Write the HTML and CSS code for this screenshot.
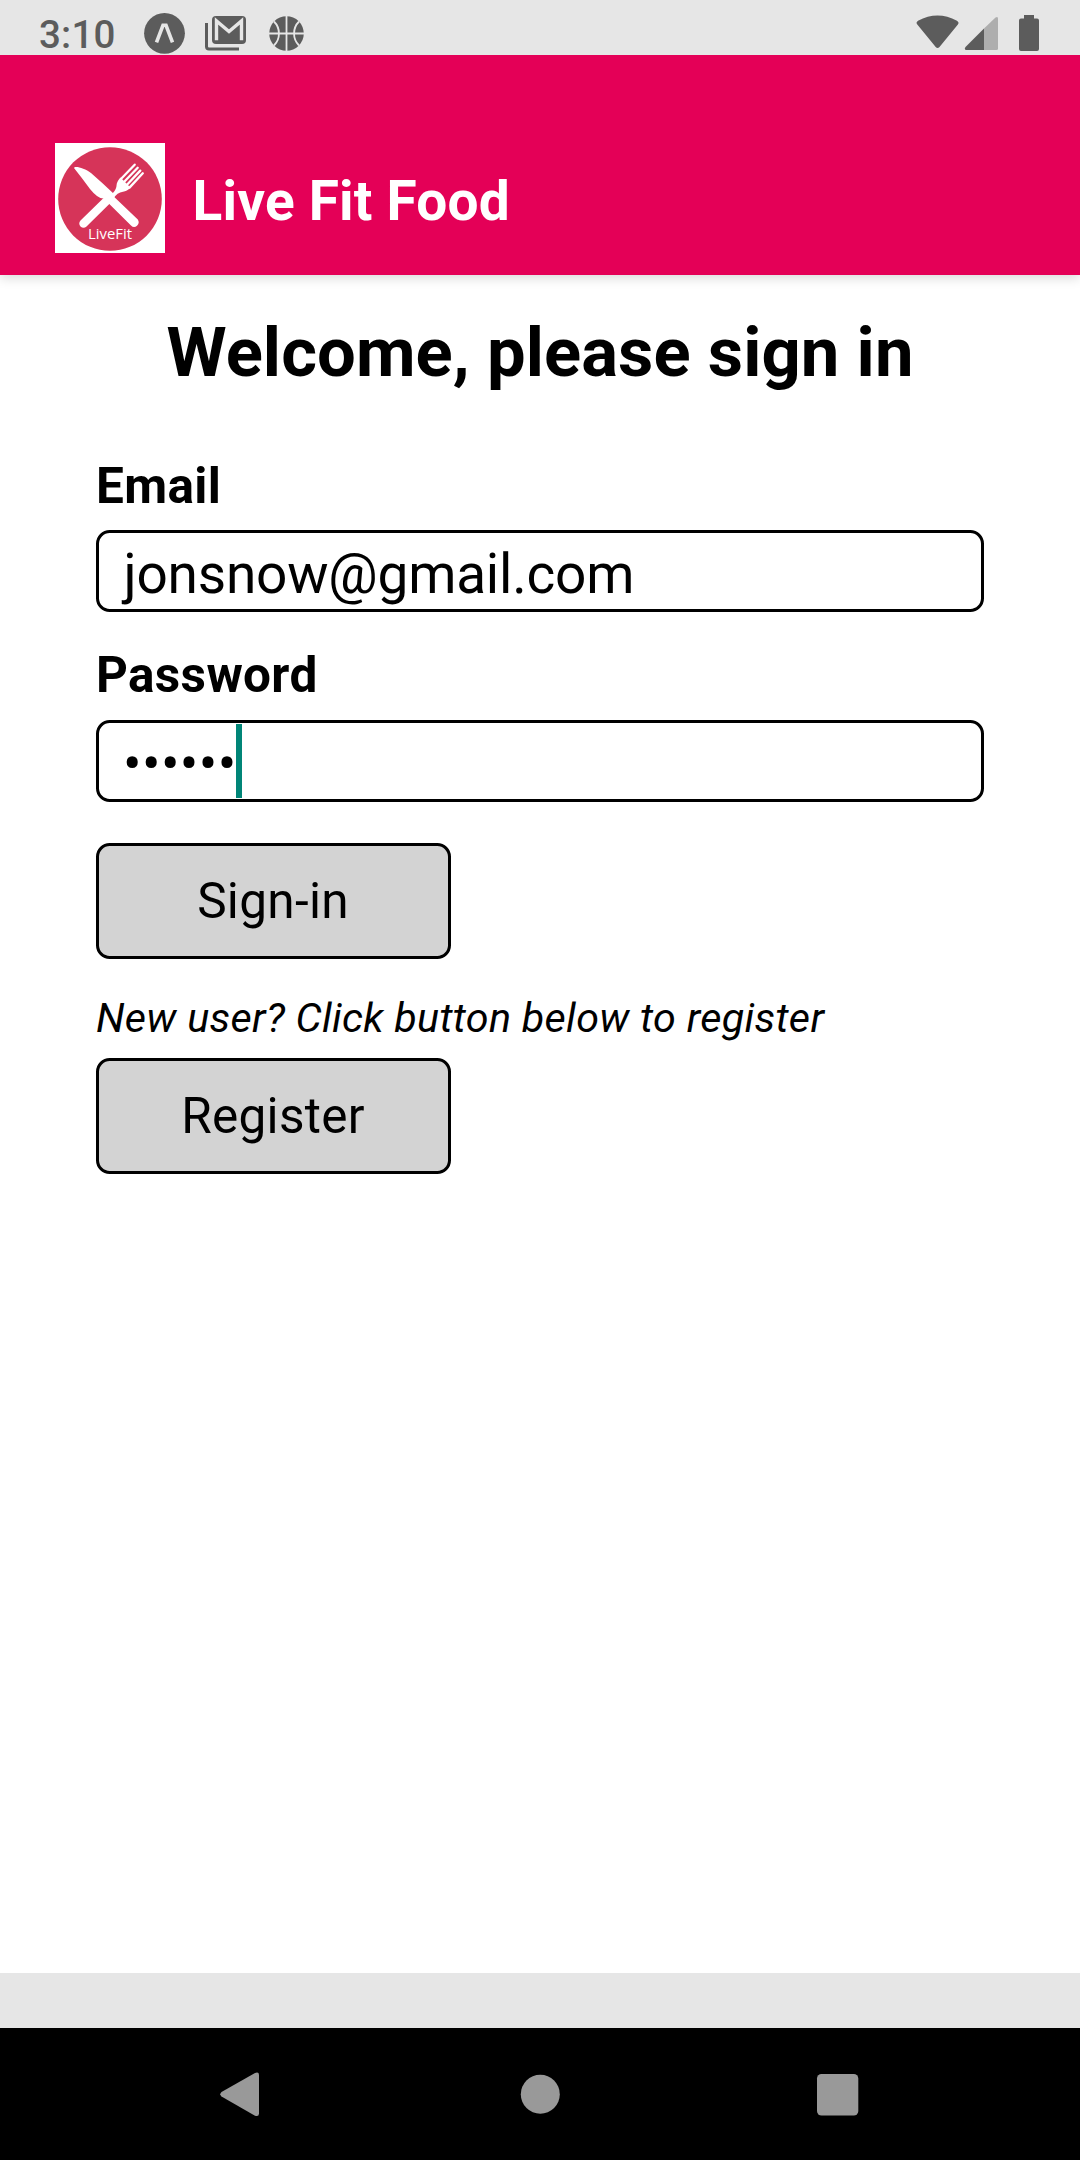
FILE: index.html
```html
<!DOCTYPE html>
<html lang="en">
<head>
<meta charset="utf-8">
<title>Live Fit Food</title>
<link rel="stylesheet" href="styles.css">
</head>
<body>
<div class="screen">
  <div class="status">
    <span class="clock">3:10</span>
    <svg class="notifications" width="164" height="55" viewBox="144 0 164 55">
      <circle cx="164.500" cy="33.300" r="20.400" fill="#5c5c5c"/>
      <path d="M156.500 42.300l6.500-17h3l6.500 17" fill="none" stroke="#e6e6e6" stroke-width="3.600"/>
      <path d="M206.500 23v23.500a2.500 2.500 0 0 0 2.500 2.500H239" fill="none" stroke="#5c5c5c" stroke-width="3"/>
      <rect x="212" y="16" width="34" height="28" rx="4" fill="#5c5c5c"/>
      <path d="M216.500 40.300V21L229 31.500 241.500 21v19.300" fill="none" stroke="#e6e6e6" stroke-width="3.400"/>
      <circle cx="286.500" cy="33.500" r="17.300" fill="#5c5c5c"/>
      <path d="M286.500 16v35M269 33.500h35M274 21.500a17 17 0 0 1 0 24M299 21.500a17 17 0 0 0 0 24" fill="none" stroke="#e6e6e6" stroke-width="1.800"/>
    </svg>
    <svg class="system" width="130" height="55" viewBox="914 0 130 55">
      <path d="M917.300 24.500Q915.500 22.500 918 20.700Q937.500 10.300 957 20.700Q959.500 22.500 957.900 24.500L939.500 47Q937.500 49 935.700 47Z" fill="#5c5c5c"/>
      <path d="M965.500 50Q964 48.500 965.500 47L984 28.500V50Z" fill="#5c5c5c"/>
      <path d="M984 50V28.500L995.500 17.500Q998 16 998 18.500V48.500Q998 50 996.500 50Z" fill="#aeaeae"/>
      <path d="M1024 15h10v3.500h3q2 0 2 2V49q0 2-2 2h-16q-2 0-2-2V20.500q0-2 2-2h3z" fill="#5c5c5c"/>
    </svg>
  </div>
  <header class="header">
    <svg class="logo" width="110" height="110" viewBox="0 0 110 110">
      <rect width="110" height="110" fill="#fff"/>
      <circle cx="55" cy="56" r="51.800" fill="#d63459"/>
      <path d="M19 25C20 22.500 30 25.500 36 30Q47 39.500 59 51V53.700L82.800 76.500Q85 80 82 82.700Q79 85.500 76 82.500L54.300 61L49 55.500Q43 56 35 46Q27 35 19 25Z" fill="#fff"/>
      <path d="M31.500 83.500Q28.500 86 25.500 83.500Q23 80.500 25.500 77.500L48.300 55.300L57.500 50.500Q61.500 46.500 61.600 42Q61.500 39 65.500 34.500L75.500 44.500Q72 48.500 68 48.700Q62 49.500 58.500 55.500L54.300 61Z" fill="#fff"/>
      <path d="M79.700 21.700L65.700 36.200M82.700 24.800L69 39M85.300 27.600L72 41.800M87.800 30.300L74.500 44.600" stroke="#fff" stroke-width="2.300" stroke-linecap="round"/>
      <text class="logo-text" x="33" y="96" textLength="44" lengthAdjust="spacingAndGlyphs">LiveFit</text>
    </svg>
    <div class="app-name">Live Fit Food</div>
  </header>
  <main class="main">
    <h1 class="heading">Welcome, please sign in</h1>
    <div class="label">Email</div>
    <div class="field email">jonsnow@gmail.com</div>
    <div class="label second">Password</div>
    <div class="field password">••••••<span class="caret"></span></div>
    <div class="button signin">Sign-in</div>
    <div class="hint">New user? Click button below to register</div>
    <div class="button">Register</div>
  </main>
  <div class="strip"></div>
  <nav class="nav">
    <svg width="1080" height="132" viewBox="0 2028 1080 132" fill="#999">
      <path d="M221.500 2096.500Q219 2094.300 221.500 2092L255 2073Q259 2071.500 259 2075V2113.500Q259 2117 255 2115.700Z"/>
      <circle cx="540.300" cy="2094.300" r="19.500"/>
      <rect x="817" y="2074" width="41.300" height="41.500" rx="4.500"/>
    </svg>
  </nav>
</div>
</body>
</html>
```
FILE: styles.css
```css
* { box-sizing: border-box; }
body {
  margin: 0;
  font-family: Roboto, sans-serif;
  color: #000;
  background: #fff;
}
.screen {
  width: 1080px;
  height: 2160px;
  display: flex;
  flex-direction: column;
  overflow: hidden;
}
svg { display: block; flex: none; }
.status {
  position: relative;
  z-index: 1;
  height: 55px;
  background: #e6e6e6;
  display: flex;
  padding: 0 36px 0 39px;
}
.clock {
  width: 105px;
  padding-top: 12px;
  font-size: 38.500px;
  line-height: 45px;
  font-weight: 500;
  letter-spacing: .2px;
  color: #5c5c5c;
}
.system { margin-left: auto; }
.header {
  height: 220px;
  background: #e40057;
  display: flex;
  align-items: flex-end;
  gap: 27.500px;
  padding: 0 55px 22px;
  box-shadow: 0 3px 11px rgba(0, 0, 0, .15);
}
.app-name {
  font-size: 55px;
  line-height: 64px;
  font-weight: 700;
  letter-spacing: .2px;
  color: #fff;
  margin-bottom: 20px;
}
.logo-text {
  font: 15px "Open Sans", sans-serif;
  fill: #fff;
}
.main {
  flex: 1;
  padding: 38px 96px 0;
}
.heading {
  margin: 0;
  font-size: 68.750px;
  line-height: 80px;
  font-weight: 700;
  letter-spacing: .08px;
  text-align: center;
  white-space: nowrap;
}
.label {
  margin-top: 64px;
  font-size: 49.500px;
  line-height: 58px;
  font-weight: 700;
  letter-spacing: .35px;
}
.label.second { margin-top: 34px; }
.field {
  margin-top: 15px;
  height: 82px;
  border: 3px solid #000;
  border-radius: 13.750px;
  padding: 6px 0 0 24.500px;
  font-size: 55px;
  line-height: 70px;
  white-space: nowrap;
  display: flex;
}
.email { letter-spacing: -.22px; }
.password {
  margin-top: 16px;
  padding-left: 24px;
  letter-spacing: .4px;
}
.caret {
  width: 6px;
  height: 74px;
  margin: -5px 0 0 -1px;
  background: #008577;
}
.button {
  width: 355px;
  height: 116px;
  border: 3px solid #000;
  border-radius: 13.750px;
  background: #d3d3d3;
  font-size: 49.500px;
  line-height: 110px;
  letter-spacing: .3px;
  text-align: center;
  padding-right: 1px;
}
.signin { margin-top: 41px; }
.hint {
  margin: 35px 0 16px;
  font-size: 41.250px;
  line-height: 48px;
  font-style: italic;
  letter-spacing: .31px;
  white-space: nowrap;
}
.strip { height: 55px; background: #e6e6e6; }
.nav { height: 132px; background: #000; }
```
